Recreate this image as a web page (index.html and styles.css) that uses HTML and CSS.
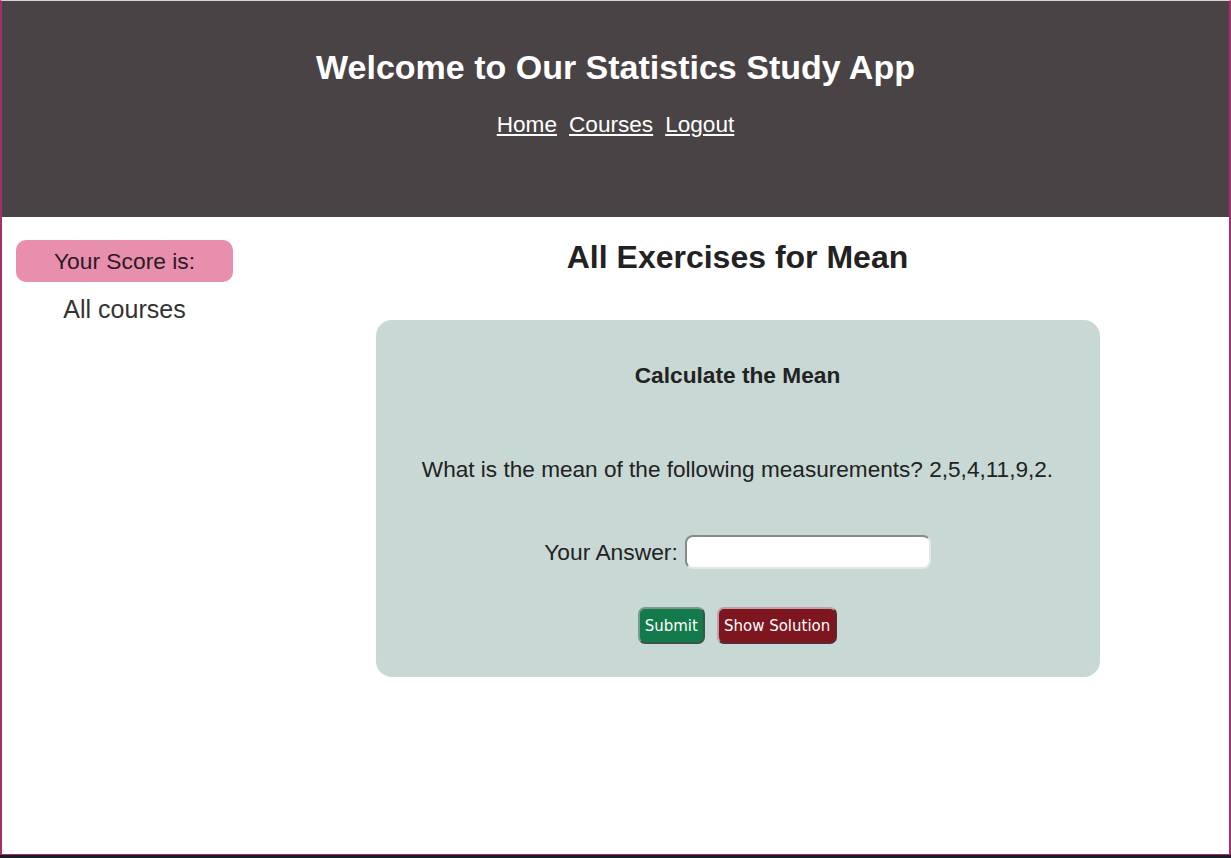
FILE: index.html
```html
<!DOCTYPE html>
<html lang="en">
<head>
<meta charset="utf-8">
<title>Statistics Study App</title>
<link rel="stylesheet" href="styles.css">
</head>
<body>
<div class="window">
  <header class="header">
    <h1 class="site-title">Welcome to Our Statistics Study App</h1>
    <nav class="nav">
      <a href="#" class="nav-link">Home</a>
      <a href="#" class="nav-link">Courses</a>
      <a href="#" class="nav-link">Logout</a>
    </nav>
  </header>
  <div class="layout">
    <aside class="sidebar">
      <div class="score">Your Score is:</div>
      <div class="all-courses">All courses</div>
    </aside>
    <main class="main">
      <h2 class="page-title">All Exercises for Mean</h2>
      <section class="card">
        <h3 class="card-title">Calculate the Mean</h3>
        <p class="question">What is the mean of the following measurements? 2,5,4,11,9,2.</p>
        <div class="answer-row">
          <label class="answer-label" for="ans">Your Answer:</label>
          <input class="answer-input" id="ans" type="text">
        </div>
        <div class="buttons">
          <button class="btn btn-submit">Submit</button>
          <button class="btn btn-solution">Show Solution</button>
        </div>
      </section>
    </main>
  </div>
</div>
<div class="statusbar"></div>
</body>
</html>
```

FILE: styles.css
```css
* { box-sizing: border-box; }
html, body {
  margin: 0;
  padding: 0;
  background: #1d1b26;
  overflow: hidden;
}
body {
  font-family: "Liberation Sans", Arial, sans-serif;
  width: 1231px;
  height: 858px;
}
.window {
  width: 1231px;
  height: 855px;
  background: #ffffff;
  border-left: 2px solid #a3306b;
  border-right: 2px solid #a3306b;
  border-top: 1px solid #d8d4d6;
  border-bottom: 1px solid #a3306b;
  display: flex;
  flex-direction: column;
}
.header {
  height: 216px;
  background: #4a4345;
  color: #fff;
  display: flex;
  flex-direction: column;
  align-items: center;
  padding-top: 47px;
}
.site-title {
  margin: 0;
  font-size: 34px;
  font-weight: bold;
  line-height: 38px;
}
.nav {
  margin-top: 26px;
  display: flex;
  gap: 12px;
}
.nav-link {
  color: #fff;
  font-size: 22.6px;
  line-height: 26px;
  text-decoration: underline;
  text-underline-offset: 2px;
}
.layout {
  display: grid;
  grid-template-columns: 244px 1fr;
  flex: 1;
}
.sidebar {
  padding: 23px 0 0 14px;
  display: flex;
  flex-direction: column;
  align-items: stretch;
}
.score {
  width: 217px;
  height: 42px;
  background: #e88fae;
  border-radius: 10px;
  color: #2c1a24;
  font-size: 22.8px;
  display: flex;
  align-items: center;
  justify-content: center;
}
.all-courses {
  width: 217px;
  text-align: center;
  font-size: 25px;
  color: #333;
  margin-top: 13px;
  line-height: 28px;
}
.main {
  display: flex;
  flex-direction: column;
  align-items: center;
  padding-top: 22px;
}
.page-title {
  margin: 0;
  font-size: 32px;
  font-weight: bold;
  color: #222;
  line-height: 36px;
}
.card {
  margin-top: 45px;
  width: 724px;
  height: 357px;
  background: #c8d8d5;
  border-radius: 16px;
  display: flex;
  flex-direction: column;
  align-items: center;
  padding-top: 43px;
}
.card-title {
  margin: 0;
  font-size: 22.7px;
  font-weight: bold;
  color: #222;
  line-height: 24px;
}
.question {
  margin: 70px 0 0;
  font-size: 22.6px;
  color: #222;
  line-height: 26px;
}
.answer-row {
  margin-top: 52px;
  display: flex;
  align-items: center;
  gap: 7px;
}
.answer-label {
  font-size: 22.8px;
  color: #222;
}
.answer-input {
  width: 246px;
  height: 34px;
  border-radius: 8px;
  border: 2px solid #8a8a8a;
  border-right-color: #e6e6e6;
  border-bottom-color: #e6e6e6;
  background: #fff;
  padding: 0 6px;
}
.buttons {
  margin-top: 38px;
  display: flex;
  gap: 12px;
}
.btn {
  font-family: "DejaVu Sans", "Liberation Sans", sans-serif;
  font-size: 15px;
  color: #fff;
  height: 37px;
  padding: 0 5px;
  border-radius: 7px;
  border: 2px solid #6b6b6b;
  cursor: pointer;
}
.btn-submit {
  background: #137a4c;
  border-color: #7c9a8a #3b5646 #3b5646 #7c9a8a;
}
.btn-solution {
  background: #7e1620;
  border-color: #c0a0a4 #5a2a30 #5a2a30 #c0a0a4;
}
.statusbar {
  height: 3px;
}
```
